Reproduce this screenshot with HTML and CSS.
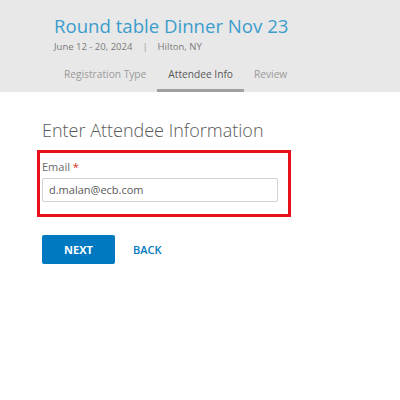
FILE: index.html
```html
<!DOCTYPE html>
<html>
<head>
<meta charset="utf-8">
<link rel="stylesheet" href="styles.css">
</head>
<body>
<header class="hero">
  <h1 class="title">Round table Dinner Nov 23</h1>
  <div class="meta"><span>June 12 - 20, 2024</span><span class="sep">|</span><span>Hilton, NY</span></div>
  <nav class="tabs">
    <span class="tab">Registration Type</span>
    <span class="tab active">Attendee Info</span>
    <span class="tab">Review</span>
  </nav>
</header>
<main class="content">
  <h2 class="heading">Enter Attendee Information</h2>
  <div class="field-box">
    <label class="label">Email <span class="req">*</span></label>
    <div class="input">d.malan@ecb.com</div>
  </div>
  <div class="actions">
    <button class="btn-primary">NEXT</button>
    <button class="btn-link">BACK</button>
  </div>
</main>
</body>
</html>
```
FILE: styles.css
```css
* { box-sizing: border-box; }
body {
  margin: 0;
  font-family: "Open Sans", "Noto Sans", sans-serif;
  background: #fff;
  color: #4c4c4c;
}
.hero {
  background: #e8e8e8;
  padding: 13px 0 0 54px;
  height: 92px;
  display: flex;
  flex-direction: column;
}
.title {
  margin: 0;
  font-weight: 400;
  font-size: 18.6px;
  line-height: 26px;
  color: #3b9dcc;
}
.meta {
  font-size: 9.5px;
  color: #7a7a7a;
  margin-top: 1px;
  display: flex;
  gap: 10px;
}
.sep { color: #999; }
.tabs {
  display: flex;
  margin-top: auto;
  margin-left: -1px;
}
.tab {
  font-size: 10.2px;
  line-height: 14px;
  color: #9a9a9a;
  padding: 0 11px 8px;
  border-bottom: 3px solid transparent;
}
.tab.active {
  color: #595959;
  border-bottom-color: #a0a0a0;
}
.tab:last-child { padding-left: 10px; }
.content {
  padding: 27px 0 0 42px;
}
.heading {
  margin: 0;
  font-weight: 300;
  font-size: 18px;
  color: #595959;
  line-height: 22px;
}
.field-box {
  margin: 9px 0 0 -5px;
  width: 254px;
  height: 67px;
  border: 3px solid #e8101a;
  padding: 6px 10px 0 2px;
}
.label {
  display: block;
  font-size: 11px;
  line-height: 16px;
  color: #6b6b6b;
}
.req { color: #d83020; }
.input {
  margin-top: 3px;
  height: 24px;
  border: 1px solid #d4d4d4;
  border-radius: 2px;
  font-size: 11px;
  line-height: 22px;
  padding-left: 6px;
  color: #595959;
}
.actions {
  display: flex;
  align-items: center;
  gap: 18px;
  margin-top: 18px;
}
.btn-primary {
  width: 73px;
  height: 29px;
  border: 0;
  border-radius: 2px;
  background: #0079c1;
  color: #fff;
  font-family: inherit;
  font-weight: 700;
  font-size: 11px;
}
.btn-link {
  border: 0;
  background: none;
  padding: 0;
  color: #0079c1;
  font-family: inherit;
  font-weight: 600;
  font-size: 11px;
}
```
